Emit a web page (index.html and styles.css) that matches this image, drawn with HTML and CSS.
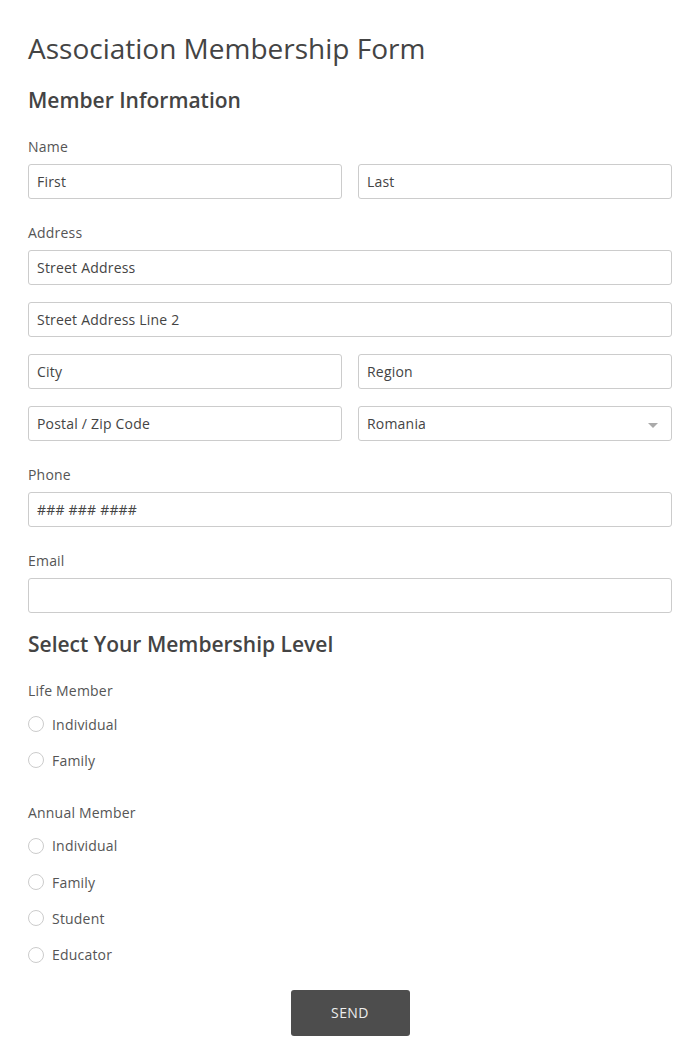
FILE: index.html
```html
<!DOCTYPE html>
<html>
<head>
<meta charset="utf-8">
<link rel="stylesheet" href="styles.css">
</head>
<body>
<form class="form">
  <h1 class="title">Association Membership Form</h1>
  <h2 class="section">Member Information</h2>

  <div class="field">
    <label class="label">Name</label>
    <div class="row">
      <div class="input">First</div>
      <div class="input">Last</div>
    </div>
  </div>

  <div class="field">
    <label class="label">Address</label>
    <div class="stack">
      <div class="input">Street Address</div>
      <div class="input">Street Address Line 2</div>
      <div class="row">
        <div class="input">City</div>
        <div class="input">Region</div>
      </div>
      <div class="row">
        <div class="input">Postal / Zip Code</div>
        <div class="input select">Romania<span class="caret"></span></div>
      </div>
    </div>
  </div>

  <div class="field">
    <label class="label">Phone</label>
    <div class="input">### ### ####</div>
  </div>

  <div class="field">
    <label class="label">Email</label>
    <div class="input"></div>
  </div>

  <h2 class="section section-2">Select Your Membership Level</h2>

  <div class="group">
    <div class="label group-label">Life Member</div>
    <div class="radio"><span class="circle"></span>Individual</div>
    <div class="radio"><span class="circle"></span>Family</div>
  </div>

  <div class="group group-2">
    <div class="label group-label">Annual Member</div>
    <div class="radio"><span class="circle"></span>Individual</div>
    <div class="radio"><span class="circle"></span>Family</div>
    <div class="radio"><span class="circle"></span>Student</div>
    <div class="radio"><span class="circle"></span>Educator</div>
  </div>

  <div class="actions">
    <button type="button" class="send">SEND</button>
  </div>
</form>
</body>
</html>
```
FILE: styles.css
```css
* { box-sizing: border-box; }
html, body { margin: 0; padding: 0; background: #fff; }
body {
  font-family: "Open Sans", "Liberation Sans", sans-serif;
  color: #555;
  font-size: 14px;
}
.form {
  padding: 28px 28px 0 28px;
  width: 700px;
}
.title {
  margin: 0;
  font-size: 28px;
  font-weight: 400;
  line-height: 40px;
  color: #444;
}
.section {
  margin: 17px 0 0 0;
  font-size: 21px;
  font-weight: 600;
  line-height: 30px;
  color: #444;
}
.field { margin-top: 22px; }
.field + .field { margin-top: 24px; }
.label {
  display: block;
  font-size: 14px;
  line-height: 20px;
  letter-spacing: 0.2px;
  color: #555;
  margin-bottom: 7px;
}
.row {
  display: flex;
  gap: 16px;
}
.row .input { flex: 1; }
.stack {
  display: flex;
  flex-direction: column;
  gap: 17px;
}
.input {
  position: relative;
  height: 35px;
  border: 1px solid #ccc;
  border-radius: 3px;
  padding: 0 8px;
  line-height: 33px;
  font-size: 14px;
  letter-spacing: 0.2px;
  color: #444;
  background: #fff;
}
.caret {
  position: absolute;
  right: 13px;
  top: 16px;
  width: 0;
  height: 0;
  border-left: 5px solid transparent;
  border-right: 5px solid transparent;
  border-top: 5px solid #aaa;
}
.section-2 { margin-top: 16px; }
.group { margin-top: 22px; }
.group-2 { margin-top: 24px; }
.group-label { margin-bottom: 5px; }
.radio {
  display: flex;
  align-items: center;
  gap: 8px;
  height: 36.3px;
  font-size: 14px;
  letter-spacing: 0.2px;
  color: #555;
}
.circle {
  width: 16px;
  height: 16px;
  border: 1px solid #ccc;
  border-radius: 50%;
  background: #fff;
}
.actions {
  display: flex;
  justify-content: center;
  margin-top: 17px;
}
.send {
  width: 119px;
  height: 46px;
  background: #4d4d4d;
  color: #eee;
  border: none;
  border-radius: 3px;
  font-family: "Open Sans", "Liberation Sans", sans-serif;
  font-size: 14px;
  letter-spacing: 0.4px;
}
```
